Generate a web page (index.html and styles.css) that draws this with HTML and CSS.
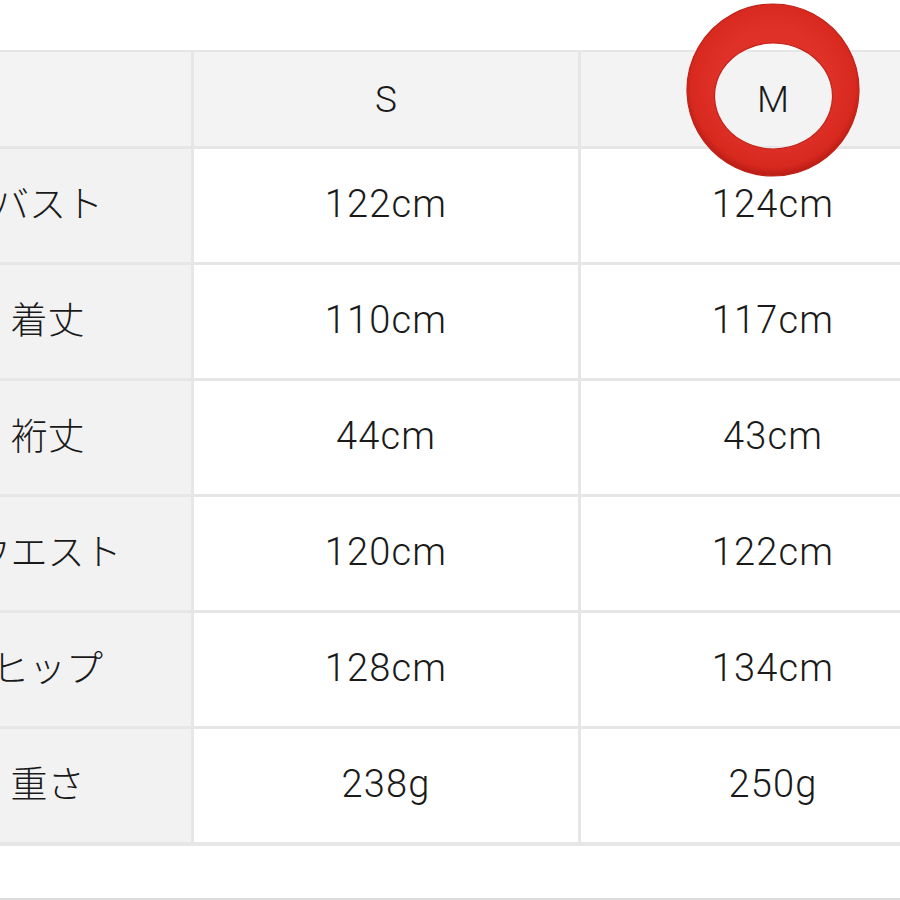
FILE: index.html
```html
<!DOCTYPE html>
<html lang="ja">
<head>
<meta charset="utf-8">
<link rel="stylesheet" href="styles.css">
</head>
<body>
<div class="sheet">
  <div class="table">
    <div class="cell label head"></div>
    <div class="cell head">S</div>
    <div class="cell head marked">M
      <svg class="ring" width="174" height="174" viewBox="0 0 174 174">
        <defs>
          <radialGradient id="rg" cx="50%" cy="47%" r="53%">
            <stop offset="0.62" stop-color="#df3128"/>
            <stop offset="0.9" stop-color="#d8291f"/>
            <stop offset="1" stop-color="#b81c14"/>
          </radialGradient>
        </defs>
        <path fill="url(#rg)" fill-rule="evenodd" stroke="#c0231a" stroke-width="1.2"
          d="M87 1 A86 86 0 1 1 86.99 1 Z M87.5 40 A59 53 0 1 0 87.51 40 Z"/>
      </svg>
    </div>

    <div class="cell label">バスト</div>
    <div class="cell">122cm</div>
    <div class="cell">124cm</div>

    <div class="cell label">着丈</div>
    <div class="cell">110cm</div>
    <div class="cell">117cm</div>

    <div class="cell label">裄丈</div>
    <div class="cell">44cm</div>
    <div class="cell">43cm</div>

    <div class="cell label">ウエスト</div>
    <div class="cell">120cm</div>
    <div class="cell">122cm</div>

    <div class="cell label">ヒップ</div>
    <div class="cell">128cm</div>
    <div class="cell">134cm</div>

    <div class="cell label">重さ</div>
    <div class="cell">238g</div>
    <div class="cell">250g</div>
  </div>
  <div class="rule"></div>
</div>
</body>
</html>
```

FILE: styles.css
```css
html, body {
  margin: 0;
  padding: 0;
  background: #ffffff;
}

body {
  overflow: hidden;
  width: 900px;
  height: 900px;
  font-family: Roboto, "Noto Sans CJK JP", sans-serif;
  color: #1a1a1a;
}

.sheet {
  position: relative;
  width: 900px;
  height: 900px;
  overflow: hidden;
  padding-top: 50px;
  box-sizing: border-box;
}

.table {
  margin-left: -96px;
  width: 1061px;
  display: grid;
  grid-template-columns: 287px 384px 384px;
  grid-template-rows: 94px repeat(6, 113px);
  gap: 3px;
  background: #e6e6e6;
  border-top: 2px solid #e6e6e6;
  border-bottom: 4px solid #e6e6e6;
}

.cell {
  background: #ffffff;
  display: flex;
  align-items: center;
  justify-content: center;
  font-size: 38px;
  font-weight: 300;
  line-height: 1;
  letter-spacing: 1.2px;
  padding-bottom: 4px;
}

.cell.label {
  background: #f2f2f2;
  font-family: "Noto Sans CJK JP", sans-serif;
  font-size: 37px;
  letter-spacing: 0;
  padding-bottom: 6px;
}

.cell.head {
  background: #f3f3f3;
  font-size: 37px;
  letter-spacing: 0;
  padding-bottom: 0;
}

.marked {
  position: relative;
}

.ring {
  position: absolute;
  left: 105px;
  top: -49px;
}

.rule {
  margin-top: 52px;
  height: 2px;
  background: #dcdcdc;
}
```
